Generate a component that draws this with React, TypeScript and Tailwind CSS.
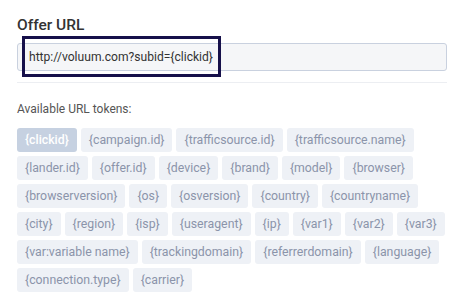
import React from 'react';

const tokens = [
  'clickid', 'campaign.id', 'trafficsource.id', 'trafficsource.name',
  'lander.id', 'offer.id', 'device', 'brand', 'model', 'browser',
  'browserversion', 'os', 'osversion', 'country', 'countryname',
  'city', 'region', 'isp', 'useragent', 'ip', 'var1', 'var2', 'var3',
  'var:variable name', 'trackingdomain', 'referrerdomain', 'language',
  'connection.type', 'carrier',
];

export default function App() {
  const active = 'clickid';

  return (
    <div className="w-[466px] h-[294px] bg-white px-[17px] overflow-hidden" style={{ fontFamily: 'Roboto, "Liberation Sans", sans-serif' }}>
      <h2 className="pt-[15px] text-[15.5px] leading-[20px] font-medium text-[#333]">Offer URL</h2>

      <div className="relative mt-[8px]">
        <div className="h-[28px] w-[430px] flex items-center px-[11px] bg-[#f5f6f8] border border-[#c9d1df] rounded-[3px] text-[12.1px] text-[#333]">
          http://voluum.com?subid={'{clickid}'}
        </div>
        {/* highlight annotation */}
        <div className="absolute left-[5px] top-[-7px] w-[199px] h-[41px] border-[3px] border-[#16104a] pointer-events-none" />
      </div>

      <div className="mt-[11px] h-px w-[430px] bg-[#eceef2]" />

      <p className="mt-[19px] text-[12px] leading-[14px] text-[#555]">Available URL tokens:</p>

      <div className="mt-[12px] flex flex-wrap gap-[4px] w-[430px]">
        {tokens.map(tk => (
          <span
            key={tk}
            className={
              tk === active
                ? 'h-[24px] px-[8px] flex items-center rounded-[3px] bg-[#c6d1e1] text-white font-medium text-[12.3px]'
                : 'h-[24px] px-[8px] flex items-center rounded-[3px] bg-[#eef1f6] text-[#8b94aa] text-[12.3px]'
            }
          >
            {'{' + tk + '}'}
          </span>
        ))}
      </div>
    </div>
  );
}
